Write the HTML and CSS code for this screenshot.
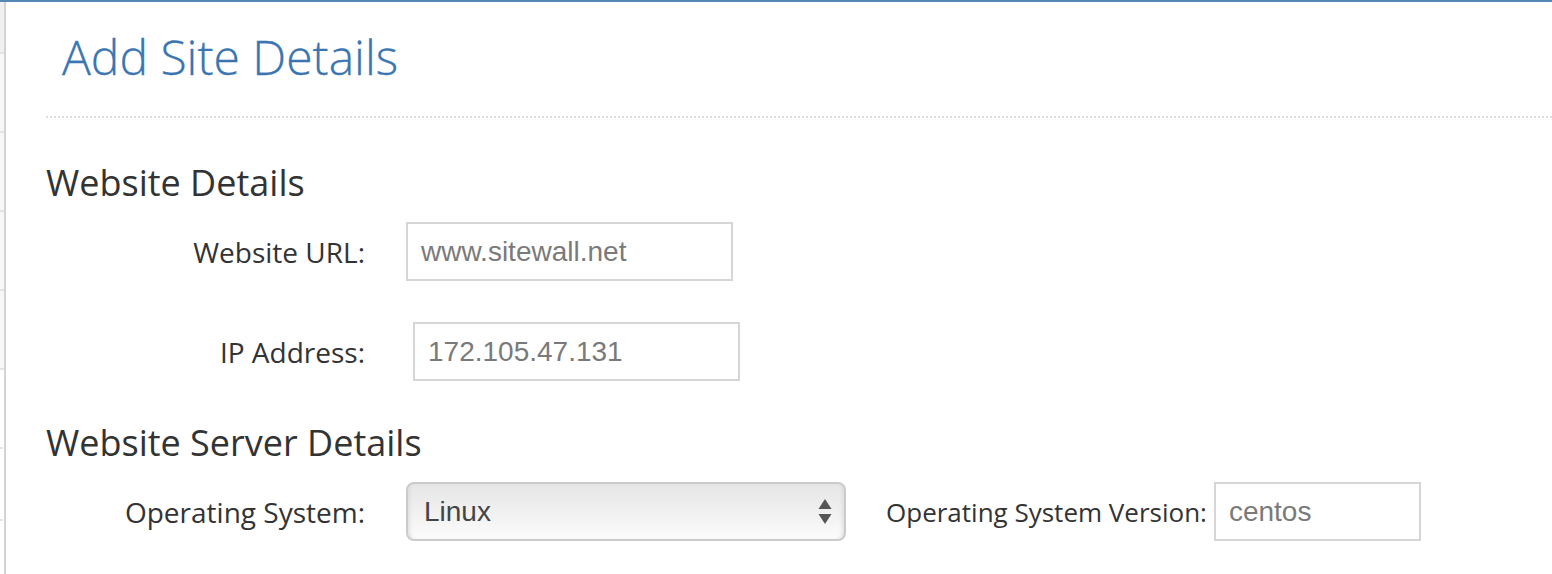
FILE: index.html
```html
<!DOCTYPE html>
<html lang="en">
<head>
<meta charset="utf-8">
<title>Add Site Details</title>
<link rel="stylesheet" href="styles.css">
</head>
<body>
<div class="page">
  <aside class="rail">
    <div class="rail-seg rail-seg-first"></div>
    <div class="rail-seg"></div>
    <div class="rail-seg"></div>
    <div class="rail-seg"></div>
    <div class="rail-seg rail-seg-last"></div>
    <div class="rail-tick rail-tick-a"></div>
    <div class="rail-tick rail-tick-b"></div>
  </aside>
  <main class="main">
    <header class="page-header">
      <h1 class="title">Add Site Details</h1>
    </header>

    <section class="section">
      <h2 class="section-title">Website Details</h2>
      <div class="row">
        <label class="label">Website URL:</label>
        <div class="field">www.sitewall.net</div>
      </div>
      <div class="row row-spaced">
        <label class="label">IP Address:</label>
        <div class="field field-shift">172.105.47.131</div>
      </div>
    </section>

    <section class="section section-second">
      <h2 class="section-title">Website Server Details</h2>
      <div class="row">
        <label class="label">Operating System:</label>
        <div class="select">
          <span>Linux</span>
          <svg class="select-arrows" width="14" height="26" viewBox="0 0 14 26"><path d="M7 0 L13.5 10 L0.5 10 Z" fill="#555"/><path d="M0.5 15 L13.5 15 L7 25 Z" fill="#555"/></svg>
        </div>
        <label class="label label-inline">Operating System Version:</label>
        <div class="field field-small">centos</div>
      </div>
    </section>
  </main>
</div>
</body>
</html>
```

FILE: styles.css
```css
html, body {
  margin: 0;
  padding: 0;
  background: #ffffff;
}

.page {
  display: flex;
  min-height: 574px;
  border-top: 2px solid #5687b5;
  box-sizing: border-box;
  font-family: "Open Sans", "DejaVu Sans", sans-serif;
  color: #333333;
}

.rail {
  position: relative;
  width: 4px;
  flex: 0 0 4px;
  border-right: 2px solid #d3d3d3;
  display: flex;
  flex-direction: column;
}

.rail-seg {
  height: 77px;
  background: #f7f7f7;
  border-bottom: 2px solid #e4e4e4;
}

.rail-seg-first {
  height: 50px;
  background: #f0f0f0;
}

.rail-tick {
  position: absolute;
  left: 0;
  width: 3px;
  height: 2px;
  background: #e4e4e4;
}

.rail-tick-a { top: 445px; }
.rail-tick-b { top: 517px; }

.main {
  flex: 1;
  padding-left: 40px;
}

.page-header {
  padding: 27px 0 32px 16px;
  border-bottom: 2px dotted #dcdcdc;
}

.title {
  margin: 0;
  font-size: 48px;
  font-weight: 300;
  line-height: 55px;
  color: #3b75b0;
  -webkit-text-stroke: 0.3px #3b75b0;
}

.section-title {
  margin: 45px 0 19px 0;
  font-size: 36px;
  font-weight: 400;
  line-height: 40px;
  color: #333333;
}

.section-second .section-title {
  margin-top: 42px;
}

.row {
  display: flex;
  align-items: center;
}

.row-spaced {
  margin-top: 41px;
}

.label {
  width: 319px;
  flex: 0 0 319px;
  text-align: right;
  font-size: 28px;
  color: #333333;
}

.label-inline {
  width: auto;
  flex: 0 0 auto;
  margin-left: 40px;
  font-size: 26px;
}

.field {
  box-sizing: border-box;
  width: 327px;
  height: 59px;
  margin-left: 41px;
  padding-left: 13px;
  border: 2px solid #d6d6d6;
  display: flex;
  align-items: center;
  font-family: "Liberation Sans", Arial, sans-serif;
  font-size: 28px;
  color: #7a7a7a;
}

.field-shift {
  margin-left: 48px;
}

.field-small {
  width: 207px;
  margin-left: 7px;
}

.select {
  box-sizing: border-box;
  width: 440px;
  height: 59px;
  margin-left: 41px;
  padding: 0 12px 0 16px;
  border: 2px solid #cbcbcb;
  border-radius: 8px;
  background: linear-gradient(#e6e6e6, #f1f1f1 55%, #fcfcfc);
  box-shadow: inset 4px 0 4px -3px #d8d8d8, inset -4px 0 4px -3px #d8d8d8;
  display: flex;
  align-items: center;
  justify-content: space-between;
  font-family: "Liberation Sans", Arial, sans-serif;
  font-size: 28px;
  color: #444444;
}

.select-arrows {
  display: block;
}
```
